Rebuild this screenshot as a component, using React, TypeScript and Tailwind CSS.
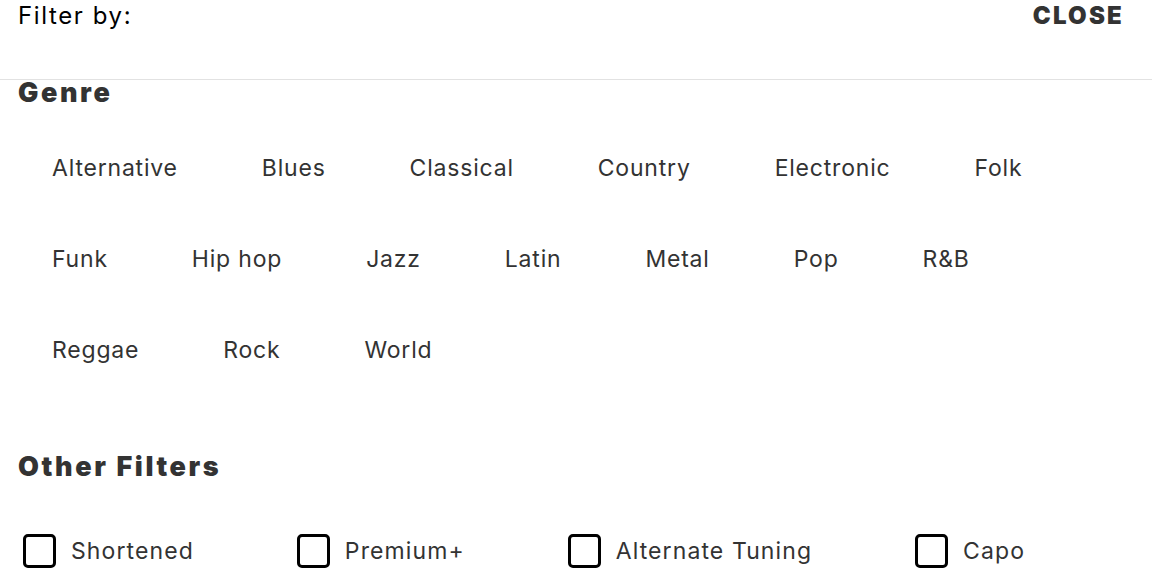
const genreRows = [
  ["Alternative", "Blues", "Classical", "Country", "Electronic", "Folk"],
  ["Funk", "Hip hop", "Jazz", "Latin", "Metal", "Pop", "R&B"],
  ["Reggae", "Rock", "World"],
];

const otherFilters = ["Shortened", "Premium+", "Alternate Tuning", "Capo"];

export default function App() {
  return (
    <div
      className="h-[570px] w-full overflow-hidden bg-white"
      style={{ fontFamily: "Inter, 'Noto Sans', sans-serif" }}
    >
      {/* Header */}
      <div className="flex h-[79px] items-start justify-between pl-[18px] pr-[28px] pt-[4px]">
        <span className="text-[24px] leading-none tracking-[1.6px] text-black">
          Filter by:
        </span>
        <button className="text-[24px] font-black leading-none tracking-[2.2px] text-[#333]">
          CLOSE
        </button>
      </div>
      <div className="h-px w-full bg-[#e2e2e2]" />

      {/* Genre */}
      <section className="px-[18px]">
        <h3 className="-mt-[1px] text-[27px] font-black leading-none tracking-[2.6px] text-[#333]">
          Genre
        </h3>
        <div className="mt-[51px] flex flex-col gap-y-[68px] pl-[34px]">
          {genreRows.map((row, i) => (
            <div key={i} className="flex gap-x-[84px]">
              {row.map((g) => (
                <button
                  key={g}
                  className="text-[23px] leading-none tracking-[0.8px] text-[#333]"
                >
                  {g}
                </button>
              ))}
            </div>
          ))}
        </div>
      </section>

      {/* Other Filters */}
      <section className="mt-[91px] px-[18px]">
        <h3 className="text-[27px] font-black leading-none tracking-[2.6px] text-[#333]">
          Other Filters
        </h3>
        <div className="mt-[54px] flex gap-x-[103px] pl-[5px]">
          {otherFilters.map((f) => (
            <label key={f} className="flex items-center gap-[15px]">
              <span className="block h-[34px] w-[33px] rounded-[5px] border-[3px] border-black" />
              <span className="text-[23px] leading-none tracking-[1.1px] text-[#333]">
                {f}
              </span>
            </label>
          ))}
        </div>
      </section>
    </div>
  );
}
